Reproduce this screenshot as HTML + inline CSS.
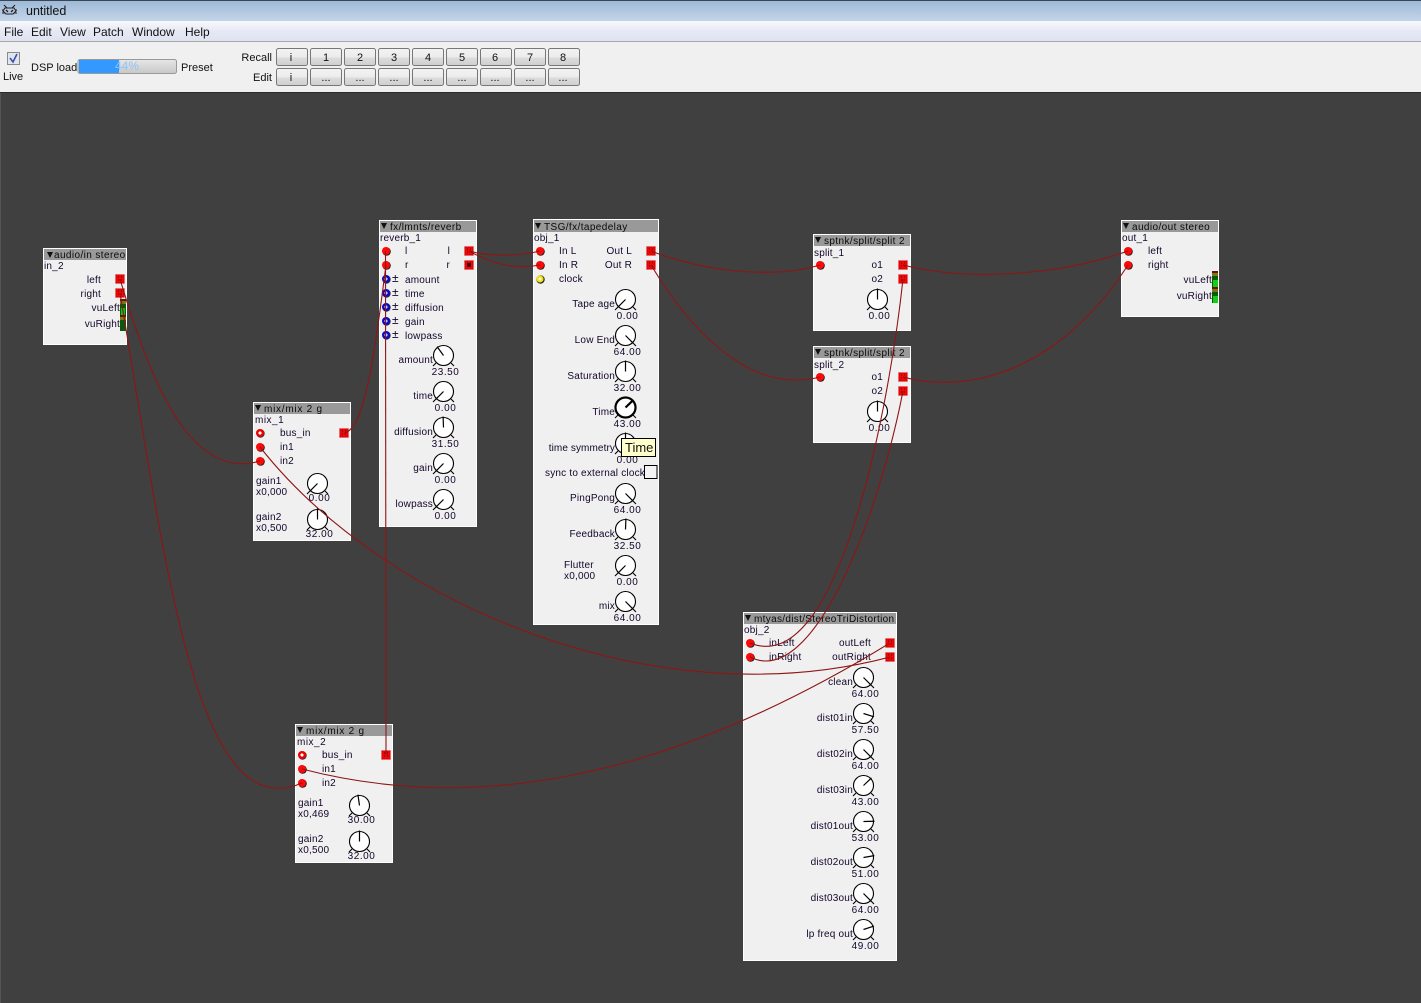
<!DOCTYPE html>
<html><head><meta charset="utf-8"><title>untitled</title>
<style>
html,body{margin:0;padding:0;background:#404040;width:1421px;height:1003px;overflow:hidden}
svg{display:block}
.u{font:11px "Liberation Sans",sans-serif;fill:#111}
.mn{font:12px "Liberation Sans",sans-serif;fill:#111}
.t{font:10px "Liberation Sans",sans-serif;letter-spacing:.2px;fill:#14062a}
.a{letter-spacing:.4px;fill:#0a0a0a}
.b{font:11px "Liberation Sans",sans-serif;fill:#111;text-anchor:middle}
.e{text-anchor:end}
.m{text-anchor:middle;letter-spacing:.55px}
.p{fill:#f0f0f0;stroke:#fff;stroke-width:1}
.h{fill:#999}
.w{fill:none;stroke:#8f1414;stroke-width:1.1}
.n{stroke:#000;stroke-width:1.2;fill:none}
</style></head><body>
<svg xmlns="http://www.w3.org/2000/svg" width="1421" height="1003" viewBox="0 0 1421 1003">
<defs>
<linearGradient id="tb" x1="0" y1="0" x2="0" y2="1"><stop offset="0" stop-color="#9cb8d6"/><stop offset="1" stop-color="#c3d5e8"/></linearGradient>
<linearGradient id="mb" x1="0" y1="0" x2="0" y2="1"><stop offset="0" stop-color="#f8f9fc"/><stop offset=".5" stop-color="#e6e9f5"/><stop offset="1" stop-color="#dfe3f1"/></linearGradient>
<linearGradient id="bt" x1="0" y1="0" x2="0" y2="1"><stop offset="0" stop-color="#f3f3f3"/><stop offset=".5" stop-color="#ececec"/><stop offset=".55" stop-color="#dcdcdc"/><stop offset="1" stop-color="#cfcfcf"/></linearGradient>
<linearGradient id="pg" x1="0" y1="0" x2="0" y2="1"><stop offset="0" stop-color="#e6e6e6"/><stop offset="1" stop-color="#c8c8c8"/></linearGradient>
<g id="k"><path d="M-7.5 7.5L-10.5 10.5M7.5 7.5L10.5 10.5" stroke="#000" stroke-width="1.1"/><circle r="10" fill="#fff" stroke="#000" stroke-width="1.1"/></g>
<g id="i"><circle cx=".6" cy=".6" r="4.2" fill="#222"/><circle r="4" fill="#ff0808"/></g>
<g id="o"><rect x="-5" y="-5" width="10" height="10" fill="#f79a9a"/><rect x="-4" y="-4" width="8" height="8" fill="#f00808" stroke="#b00" stroke-width=".6"/><path d="M-2 -2h1M1 -2h1M-2 1h1M1 1h1" stroke="#600" stroke-width="1"/></g>
<g id="ri"><circle cx=".5" cy=".5" r="4.2" fill="#333"/><circle r="2.800" fill="#fff" stroke="#e00" stroke-width="2.400"/></g>
<g id="bi"><circle cx=".5" cy=".5" r="4.2" fill="#333"/><circle r="2.800" fill="#cfd8ff" stroke="#0a0ac8" stroke-width="2.400"/></g>
<g id="yi"><circle cx=".5" cy=".5" r="4.2" fill="#222"/><circle r="2.600" fill="#eee" stroke="#f0e000" stroke-width="2"/></g>
<path id="tr" d="M0 0h6l-3 6z" fill="#111"/>
<g id="btn"><rect x=".5" y=".5" width="31" height="17" rx="2" fill="url(#bt)" stroke="#777"/></g>
</defs>

<!-- window chrome -->
<rect width="1421" height="1003" fill="#404040"/>
<rect width="1421" height="21" fill="url(#tb)"/>
<rect width="1421" height="1" fill="#3a4654"/>
<g stroke="#222" stroke-width="1.1" fill="none"><path d="M4 5l3 3M15 5l-3 3M5 8h9l2 3-3 3H6L3 11zM2 10h2M15 10h2M2 13h3M14 13h3"/></g>
<path d="M6 10l2 2M13 10l-2 2" stroke="#222" stroke-width="1.4"/>
<text class="mn" x="26" y="15" style="font-size:12.5px">untitled</text>
<rect y="21" width="1421" height="20" fill="url(#mb)"/>
<text class="mn" x="4" y="36">File</text><text class="mn" x="31" y="36">Edit</text><text class="mn" x="60" y="36">View</text><text class="mn" x="93" y="36">Patch</text><text class="mn" x="132" y="36">Window</text><text class="mn" x="185" y="36">Help</text>
<rect y="41" width="1421" height="1" fill="#a8a8a8"/>
<rect y="42" width="1421" height="50" fill="#f0f0f0"/>
<rect y="92" width="1421" height="1" fill="#2c2c2c"/>
<rect x="0" y="93" width="1" height="910" fill="#555"/>

<rect x="7.5" y="52.5" width="12" height="12" fill="#dfe6ef" stroke="#8a8a8a"/>
<path d="M10 58l3 4 4-8" fill="none" stroke="#3c50a8" stroke-width="1.6"/>
<text class="u" x="3" y="80">Live</text>
<text class="u" x="31" y="71">DSP load</text>
<rect x="78" y="59.500" width="98.500" height="14" rx="2" fill="url(#pg)" stroke="#999"/>
<rect x="79" y="60" width="40" height="13" fill="#3399ff"/>
<text x="115" y="70" style="font:12px 'Liberation Sans',sans-serif;fill:#8fc4f8">44%</text>
<text class="u" x="181" y="71">Preset</text>
<text class="u e" x="272" y="61">Recall</text>
<text class="u e" x="272" y="81">Edit</text>

<g>
<use href="#btn" x="276" y="48"/><use href="#btn" x="310" y="48"/><use href="#btn" x="344" y="48"/><use href="#btn" x="378" y="48"/><use href="#btn" x="412" y="48"/><use href="#btn" x="446" y="48"/><use href="#btn" x="480" y="48"/><use href="#btn" x="514" y="48"/><use href="#btn" x="548" y="48"/>
<use href="#btn" x="276" y="68"/><use href="#btn" x="310" y="68"/><use href="#btn" x="344" y="68"/><use href="#btn" x="378" y="68"/><use href="#btn" x="412" y="68"/><use href="#btn" x="446" y="68"/><use href="#btn" x="480" y="68"/><use href="#btn" x="514" y="68"/><use href="#btn" x="548" y="68"/>
<text class="b" x="291" y="61">i</text><text class="b" x="326" y="61">1</text><text class="b" x="360" y="61">2</text><text class="b" x="394" y="61">3</text><text class="b" x="428" y="61">4</text><text class="b" x="462" y="61">5</text><text class="b" x="495" y="61">6</text><text class="b" x="530" y="61">7</text><text class="b" x="563" y="61">8</text>
<text class="b" x="291" y="81">i</text><text class="b" x="326" y="81">...</text><text class="b" x="360" y="81">...</text><text class="b" x="394" y="81">...</text><text class="b" x="428" y="81">...</text><text class="b" x="462" y="81">...</text><text class="b" x="495" y="81">...</text><text class="b" x="530" y="81">...</text><text class="b" x="563" y="81">...</text>
</g>

<!-- in_2 -->
<rect class="p" x="43.500" y="248.500" width="83" height="96"/>
<rect class="h" x="44" y="249" width="82" height="11"/>
<use href="#tr" x="47" y="252"/>
<text class="t a" x="54" y="258">audio/in stereo</text>
<text class="t" x="44" y="269">in_2</text>
<text class="t e" x="101" y="283">left</text>
<text class="t e" x="101" y="297">right</text>
<text class="t e" x="120" y="311">vuLeft</text>
<text class="t e" x="120" y="327">vuRight</text>
<use href="#o" x="120" y="279"/><use href="#o" x="120" y="293"/>
<rect x="120" y="299" width="6" height="2" fill="#6a1010"/><rect x="120" y="301" width="6" height="3" fill="#7a7a10"/><rect x="120" y="304" width="6" height="11" fill="#0a5a0a"/><rect x="121" y="308" width="4" height="7" fill="#12c012"/>
<rect x="120" y="315" width="6" height="2" fill="#6a1010"/><rect x="120" y="317" width="6" height="3" fill="#7a7a10"/><rect x="120" y="320" width="6" height="11" fill="#0a5a0a"/>

<!-- mix_1 -->
<rect class="p" x="253.500" y="402.500" width="97" height="138"/>
<rect class="h" x="254" y="403" width="96" height="11"/>
<use href="#tr" x="255" y="405"/>
<text class="t a" x="264" y="412" style="letter-spacing:.75px">mix/mix 2 g</text>
<text class="t" x="255" y="423" style="letter-spacing:.5px">mix_1</text>
<text class="t" x="280" y="436">bus_in</text><text class="t" x="280" y="450">in1</text><text class="t" x="280" y="464">in2</text>
<use href="#ri" x="260" y="433"/><use href="#i" x="260" y="447"/><use href="#i" x="260" y="461"/><use href="#o" x="344" y="433"/>
<text class="t" x="256" y="484">gain1</text><text class="t" x="256" y="495">x0,000</text>
<text class="t" x="256" y="520">gain2</text><text class="t" x="256" y="531">x0,500</text>
<g transform="translate(317.500,483.500)"><use href="#k"/><path class="n" d="M0 0V-11" transform="rotate(-135)"/></g><text class="t m" x="319.500" y="501">0.00</text>
<g transform="translate(317.500,519.500)"><use href="#k"/><path class="n" d="M0 0V-11"/></g><text class="t m" x="319.500" y="537">32.00</text>

<!-- mix_2 -->
<rect class="p" x="295.500" y="724.500" width="97" height="138"/>
<rect class="h" x="296" y="725" width="96" height="11"/>
<use href="#tr" x="297" y="727"/>
<text class="t a" x="306" y="734" style="letter-spacing:.75px">mix/mix 2 g</text>
<text class="t" x="297" y="745" style="letter-spacing:.5px">mix_2</text>
<text class="t" x="322" y="758">bus_in</text><text class="t" x="322" y="772">in1</text><text class="t" x="322" y="786">in2</text>
<use href="#ri" x="302" y="755"/><use href="#i" x="302" y="769"/><use href="#i" x="302" y="783"/><use href="#o" x="386" y="755"/>
<text class="t" x="298" y="806">gain1</text><text class="t" x="298" y="817">x0,469</text>
<text class="t" x="298" y="842">gain2</text><text class="t" x="298" y="853">x0,500</text>
<g transform="translate(359.500,805.500)"><use href="#k"/><path class="n" d="M0 0V-11" transform="rotate(-8.400)"/></g><text class="t m" x="361.500" y="823">30.00</text>
<g transform="translate(359.500,841.500)"><use href="#k"/><path class="n" d="M0 0V-11"/></g><text class="t m" x="361.500" y="859">32.00</text>

<!-- reverb -->
<rect class="p" x="379.500" y="220.500" width="97" height="306"/>
<rect class="h" x="380" y="221" width="96" height="11"/>
<use href="#tr" x="381" y="223"/>
<text class="t a" x="390" y="230">fx/lmnts/reverb</text>
<text class="t" x="380" y="241">reverb_1</text>
<text class="t" x="405" y="254">l</text><text class="t" x="405" y="268">r</text>
<text class="t e" x="450" y="254">l</text><text class="t e" x="450" y="268">r</text>
<use href="#i" x="386" y="251"/><use href="#i" x="386" y="265"/>
<use href="#o" x="469" y="251"/><use href="#o" x="469" y="265"/><rect x="467" y="263" width="4" height="4" fill="#400"/>
<use href="#bi" x="386" y="279"/><use href="#bi" x="386" y="293"/><use href="#bi" x="386" y="307"/><use href="#bi" x="386" y="321"/><use href="#bi" x="386" y="335"/>
<text class="t" x="392" y="282" style="font-size:12px">±</text><text class="t" x="392" y="296" style="font-size:12px">±</text><text class="t" x="392" y="310" style="font-size:12px">±</text><text class="t" x="392" y="324" style="font-size:12px">±</text><text class="t" x="392" y="338" style="font-size:12px">±</text>
<text class="t" x="405" y="283">amount</text><text class="t" x="405" y="297">time</text><text class="t" x="405" y="311">diffusion</text><text class="t" x="405" y="325">gain</text><text class="t" x="405" y="339">lowpass</text>
<text class="t e" x="433" y="363">amount</text><text class="t e" x="433" y="399">time</text><text class="t e" x="433" y="435">diffusion</text><text class="t e" x="433" y="471">gain</text><text class="t e" x="433" y="507">lowpass</text>
<g transform="translate(443.500,355.500)"><use href="#k"/><path class="n" d="M0 0V-11" transform="rotate(-35.900)"/></g><text class="t m" x="445.500" y="375">23.50</text>
<g transform="translate(443.500,391.500)"><use href="#k"/><path class="n" d="M0 0V-11" transform="rotate(-135)"/></g><text class="t m" x="445.500" y="411">0.00</text>
<g transform="translate(443.500,427.500)"><use href="#k"/><path class="n" d="M0 0V-11" transform="rotate(-2.100)"/></g><text class="t m" x="445.500" y="447">31.50</text>
<g transform="translate(443.500,463.500)"><use href="#k"/><path class="n" d="M0 0V-11" transform="rotate(-135)"/></g><text class="t m" x="445.500" y="483">0.00</text>
<g transform="translate(443.500,499.500)"><use href="#k"/><path class="n" d="M0 0V-11" transform="rotate(-135)"/></g><text class="t m" x="445.500" y="519">0.00</text>

<!-- tapedelay -->
<rect class="p" x="533.500" y="219.500" width="125" height="405"/>
<rect class="h" x="534" y="220" width="124" height="12"/>
<use href="#tr" x="535" y="223"/>
<text class="t a" x="544" y="230">TSG/fx/tapedelay</text>
<text class="t" x="534" y="241">obj_1</text>
<text class="t" x="559" y="254">In L</text><text class="t" x="559" y="268">In R</text><text class="t" x="559" y="282">clock</text>
<text class="t e" x="632" y="254">Out L</text><text class="t e" x="632" y="268">Out R</text>
<use href="#i" x="540" y="251"/><use href="#i" x="540" y="265"/><use href="#yi" x="540" y="279"/>
<use href="#o" x="651" y="251"/><use href="#o" x="651" y="265"/>
<text class="t e" x="615" y="307">Tape age</text><text class="t e" x="615" y="343">Low End</text><text class="t e" x="615" y="379">Saturation</text><text class="t e" x="615" y="415">Time</text><text class="t e" x="615" y="451" style="letter-spacing:.1px">time symmetry</text>
<text class="t" x="545" y="476">sync to external clock</text>
<rect x="644.500" y="465.500" width="12.500" height="13" fill="#f4f4f4" stroke="#000"/>
<text class="t e" x="615" y="501">PingPong</text><text class="t e" x="615" y="537">Feedback</text>
<text class="t" x="564" y="568">Flutter</text><text class="t" x="564" y="579">x0,000</text>
<text class="t e" x="615" y="609">mix</text>
<g transform="translate(625.500,299.500)"><use href="#k"/><path class="n" d="M0 0V-11" transform="rotate(-135)"/></g><text class="t m" x="627.500" y="319">0.00</text>
<g transform="translate(625.500,335.500)"><use href="#k"/><path class="n" d="M0 0V-11" transform="rotate(135)"/></g><text class="t m" x="627.500" y="355">64.00</text>
<g transform="translate(625.500,371.500)"><use href="#k"/><path class="n" d="M0 0V-11"/></g><text class="t m" x="627.500" y="391">32.00</text>
<g transform="translate(625.500,407.500)"><path d="M-7.500 7.500L-10.500 10.500M7.500 7.500L10.500 10.500" stroke="#000"/><circle r="10" fill="#fff" stroke="#000" stroke-width="2.200"/><path d="M0 0V-10" stroke="#000" stroke-width="2.200" transform="rotate(46.400)"/></g><text class="t m" x="627.500" y="427">43.00</text>
<g transform="translate(625.500,443.500)"><use href="#k"/><path class="n" d="M0 0V-11"/></g><text class="t m" x="627.500" y="463">0.00</text>
<g transform="translate(625.500,493.500)"><use href="#k"/><path class="n" d="M0 0V-11" transform="rotate(135)"/></g><text class="t m" x="627.500" y="513">64.00</text>
<g transform="translate(625.500,529.500)"><use href="#k"/><path class="n" d="M0 0V-11" transform="rotate(2.100)"/></g><text class="t m" x="627.500" y="549">32.50</text>
<g transform="translate(625.500,565.500)"><use href="#k"/><path class="n" d="M0 0V-11" transform="rotate(-135)"/></g><text class="t m" x="627.500" y="585">0.00</text>
<g transform="translate(625.500,601.500)"><use href="#k"/><path class="n" d="M0 0V-11" transform="rotate(135)"/></g><text class="t m" x="627.500" y="621">64.00</text>

<!-- split_1 -->
<rect class="p" x="813.500" y="234.500" width="97" height="96"/>
<rect class="h" x="814" y="235" width="96" height="11"/>
<use href="#tr" x="815" y="237"/>
<text class="t a" x="824" y="244">sptnk/split/split 2</text>
<text class="t" x="814" y="256">split_1</text>
<text class="t e" x="883" y="268">o1</text><text class="t e" x="883" y="282">o2</text>
<use href="#i" x="820" y="265"/><use href="#o" x="903" y="265"/><use href="#o" x="903" y="279"/>
<g transform="translate(877.500,299.500)"><use href="#k"/><path class="n" d="M0 0V-11"/></g><text class="t m" x="879.500" y="319">0.00</text>

<!-- split_2 -->
<rect class="p" x="813.500" y="346.500" width="97" height="96"/>
<rect class="h" x="814" y="347" width="96" height="11"/>
<use href="#tr" x="815" y="349"/>
<text class="t a" x="824" y="356">sptnk/split/split 2</text>
<text class="t" x="814" y="368">split_2</text>
<text class="t e" x="883" y="380">o1</text><text class="t e" x="883" y="394">o2</text>
<use href="#i" x="820" y="377"/><use href="#o" x="903" y="377"/><use href="#o" x="903" y="391"/>
<g transform="translate(877.500,411.500)"><use href="#k"/><path class="n" d="M0 0V-11"/></g><text class="t m" x="879.500" y="431">0.00</text>

<!-- out_1 -->
<rect class="p" x="1121.500" y="220.500" width="97" height="96"/>
<rect class="h" x="1122" y="221" width="96" height="11"/>
<use href="#tr" x="1123" y="223"/>
<text class="t a" x="1132" y="230">audio/out stereo</text>
<text class="t" x="1122" y="241">out_1</text>
<text class="t" x="1148" y="254">left</text><text class="t" x="1148" y="268">right</text>
<text class="t e" x="1212" y="283">vuLeft</text><text class="t e" x="1212" y="299">vuRight</text>
<use href="#i" x="1128" y="251"/><use href="#i" x="1128" y="265"/>
<rect x="1212" y="271" width="6" height="2" fill="#6a1010"/><rect x="1212" y="273" width="6" height="3" fill="#7a7a10"/><rect x="1212" y="276" width="6" height="11" fill="#0a5a0a"/><rect x="1213" y="280" width="5" height="7" fill="#12d012"/>
<rect x="1212" y="287" width="6" height="2" fill="#6a1010"/><rect x="1212" y="289" width="6" height="3" fill="#7a7a10"/><rect x="1212" y="292" width="6" height="11" fill="#0a5a0a"/><rect x="1213" y="296" width="5" height="7" fill="#12d012"/>

<!-- obj_2 -->
<rect class="p" x="743.500" y="612.500" width="153" height="348"/>
<rect class="h" x="744" y="613" width="152" height="11"/>
<use href="#tr" x="745" y="615"/>
<text class="t a" x="754" y="622" style="letter-spacing:.32px">mtyas/dist/StereoTriDistortion</text>
<text class="t" x="744" y="633">obj_2</text>
<text class="t" x="769" y="646">inLeft</text><text class="t" x="769" y="660">inRight</text>
<text class="t e" x="871" y="646">outLeft</text><text class="t e" x="871" y="660">outRight</text>
<use href="#i" x="750" y="643"/><use href="#i" x="750" y="657"/><use href="#o" x="890" y="643"/><use href="#o" x="890" y="657"/>
<text class="t e" x="853" y="685">clean</text><text class="t e" x="853" y="721">dist01in</text><text class="t e" x="853" y="757">dist02in</text><text class="t e" x="853" y="793">dist03in</text><text class="t e" x="853" y="829">dist01out</text><text class="t e" x="853" y="865">dist02out</text><text class="t e" x="853" y="901">dist03out</text><text class="t e" x="853" y="937">lp freq out</text>
<g transform="translate(863.500,677.500)"><use href="#k"/><path class="n" d="M0 0V-11" transform="rotate(135)"/></g><text class="t m" x="865.500" y="697">64.00</text>
<g transform="translate(863.500,713.500)"><use href="#k"/><path class="n" d="M0 0V-11" transform="rotate(107.600)"/></g><text class="t m" x="865.500" y="733">57.50</text>
<g transform="translate(863.500,749.500)"><use href="#k"/><path class="n" d="M0 0V-11" transform="rotate(135)"/></g><text class="t m" x="865.500" y="769">64.00</text>
<g transform="translate(863.500,785.500)"><use href="#k"/><path class="n" d="M0 0V-11" transform="rotate(46.400)"/></g><text class="t m" x="865.500" y="805">43.00</text>
<g transform="translate(863.500,821.500)"><use href="#k"/><path class="n" d="M0 0V-11" transform="rotate(88.600)"/></g><text class="t m" x="865.500" y="841">53.00</text>
<g transform="translate(863.500,857.500)"><use href="#k"/><path class="n" d="M0 0V-11" transform="rotate(80.200)"/></g><text class="t m" x="865.500" y="877">51.00</text>
<g transform="translate(863.500,893.500)"><use href="#k"/><path class="n" d="M0 0V-11" transform="rotate(135)"/></g><text class="t m" x="865.500" y="913">64.00</text>
<g transform="translate(863.500,929.500)"><use href="#k"/><path class="n" d="M0 0V-11" transform="rotate(71.700)"/></g><text class="t m" x="865.500" y="949">49.00</text>

<!-- wires -->
<g class="w">
<path class="w" d="M120 279C150 380 190 482 260 461"/>
<path class="w" d="M120 293C165 560 195 830 302 783"/>
<path class="w" d="M344 433C365 430 375 350 386 265"/>
<path class="w" d="M469 251C490 257 520 256 540 251"/>
<path class="w" d="M469 251C490 263 515 270 540 265"/>
<path class="w" d="M651 251C700 270 770 280 820 265"/>
<path class="w" d="M651 265C690 330 750 395 820 377"/>
<path class="w" d="M903 265C970 282 1060 275 1128 251"/>
<path class="w" d="M903 377C970 395 1060 370 1128 265"/>
<path class="w" d="M903 279C890 400 840 680 750 643"/>
<path class="w" d="M903 391C880 510 815 690 750 657"/>
<path class="w" d="M260 447C380 600 650 720 890 657"/>
<path class="w" d="M302 769C460 810 650 790 890 643"/>
<path class="w" d="M386 755L385.500 251"/>
</g>

<!-- tooltip -->
<rect x="621.500" y="438.500" width="34" height="18" fill="#ffffcc" stroke="#000"/>
<text x="625" y="452" style="font:13px 'Liberation Sans',sans-serif;fill:#111">Time</text>
</svg>
</body></html>
